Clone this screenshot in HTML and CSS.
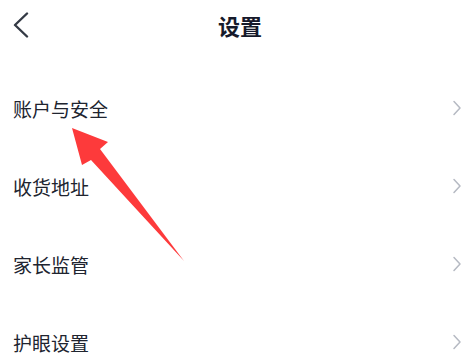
FILE: index.html
```html
<!DOCTYPE html>
<html lang="zh-CN">
<head>
<meta charset="utf-8">
<title>设置</title>
<link rel="stylesheet" href="styles.css">
</head>
<body>
<div class="page">
  <header class="header">
    <svg class="back" width="20" height="30" viewBox="0 0 20 30">
      <polyline points="15,1.5 3,13 15,24.5" fill="none" stroke="#343a45" stroke-width="2.4" stroke-linecap="round" stroke-linejoin="round"/>
    </svg>
    <h1 class="title">设置</h1>
  </header>
  <ul class="list">
    <li class="row"><span class="label">账户与安全</span><svg class="chev" width="10" height="16" viewBox="0 0 10 16"><polyline points="2,1.5 8,8 2,14.5" fill="none" stroke="#b6bac3" stroke-width="1.5" stroke-linecap="round" stroke-linejoin="round"/></svg></li>
    <li class="row"><span class="label">收货地址</span><svg class="chev" width="10" height="16" viewBox="0 0 10 16"><polyline points="2,1.5 8,8 2,14.5" fill="none" stroke="#b6bac3" stroke-width="1.5" stroke-linecap="round" stroke-linejoin="round"/></svg></li>
    <li class="row"><span class="label">家长监管</span><svg class="chev" width="10" height="16" viewBox="0 0 10 16"><polyline points="2,1.5 8,8 2,14.5" fill="none" stroke="#b6bac3" stroke-width="1.5" stroke-linecap="round" stroke-linejoin="round"/></svg></li>
    <li class="row"><span class="label">护眼设置</span><svg class="chev" width="10" height="16" viewBox="0 0 10 16"><polyline points="2,1.5 8,8 2,14.5" fill="none" stroke="#b6bac3" stroke-width="1.5" stroke-linecap="round" stroke-linejoin="round"/></svg></li>
  </ul>
  <svg class="pointer" width="474" height="354" viewBox="0 0 474 354">
    <polygon points="72,128 108,142 100,149 184,261 91,160 82,165" fill="#fd3a3b"/>
  </svg>
</div>
</body>
</html>
```

FILE: styles.css
```css
html, body {
  margin: 0;
  padding: 0;
  background: #ffffff;
}
.page {
  position: relative;
  width: 474px;
  height: 354px;
  overflow: hidden;
  font-family: "Noto Sans CJK SC", "Noto Sans", sans-serif;
}
.header {
  height: 50px;
  display: flex;
  align-items: center;
  justify-content: center;
  position: relative;
}
.back {
  position: absolute;
  left: 12px;
  top: 12px;
}
.title {
  margin: 0;
  font-size: 22px;
  font-weight: 700;
  color: #161a2b;
  line-height: 1;
  padding-left: 6px;
}
.list {
  list-style: none;
  margin: 0;
  padding: 19px 0 0 0;
}
.row {
  height: 78px;
  display: flex;
  align-items: center;
  justify-content: space-between;
  padding: 0 12px 0 13px;
}
.label {
  font-size: 19px;
  color: #20242f;
  line-height: 1;
}
.chev {
  display: block;
}
.pointer {
  position: absolute;
  left: 0;
  top: 0;
  pointer-events: none;
}
```
